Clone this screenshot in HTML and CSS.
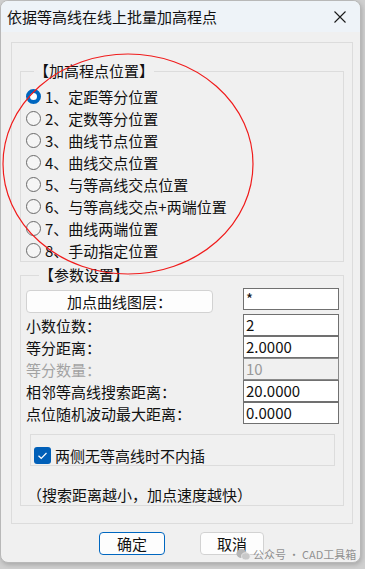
FILE: index.html
```html
<!DOCTYPE html>
<html lang="zh-CN">

<head>
    <meta charset="utf-8">
    <title>依据等高线在线上批量加高程点</title>
    <link rel="stylesheet" href="styles.css">
</head>

<body>
    <div class="window">
        <div class="titlebar">
            <span class="title">依据等高线在线上批量加高程点</span>
            <svg class="close" width="14" height="14" viewBox="0 0 14 14">
                <path d="M1.5 1.5L12.5 12.5M12.5 1.5L1.5 12.5" stroke="#1a1a1a" stroke-width="1.1" fill="none" />
            </svg>
        </div>

        <div class="client">
            <div class="frame">
                <fieldset class="group pos">
                    <legend>【加高程点位置】</legend>
                    <div class="opt"><span class="radio on"></span>1、定距等分位置</div>
                    <div class="opt"><span class="radio"></span>2、定数等分位置</div>
                    <div class="opt"><span class="radio"></span>3、曲线节点位置</div>
                    <div class="opt"><span class="radio"></span>4、曲线交点位置</div>
                    <div class="opt"><span class="radio"></span>5、与等高线交点位置</div>
                    <div class="opt"><span class="radio"></span>6、与等高线交点+两端位置</div>
                    <div class="opt"><span class="radio"></span>7、曲线两端位置</div>
                    <div class="opt"><span class="radio"></span>8、手动指定位置</div>
                </fieldset>

                <fieldset class="group params">
                    <legend>【参数设置】</legend>
                    <div class="row first">
                        <span class="btn layer">加点曲线图层：</span>
                        <span class="field">*</span>
                    </div>
                    <div class="row"><span class="lbl">小数位数：</span><span class="field">2</span></div>
                    <div class="row"><span class="lbl">等分距离：</span><span class="field">2.0000</span></div>
                    <div class="row off"><span class="lbl">等分数量：</span><span class="field">10</span></div>
                    <div class="row"><span class="lbl">相邻等高线搜索距离：</span><span class="field">20.0000</span></div>
                    <div class="row"><span class="lbl">点位随机波动最大距离：</span><span class="field">0.0000</span></div>

                    <div class="checkbox-box">
                        <span class="check">
                            <svg width="17" height="17" viewBox="0 0 17 17">
                                <path d="M4.5 8.8L7.2 11.3L12.5 6" stroke="#fff" stroke-width="1.2" fill="none" />
                            </svg>
                        </span>
                        两侧无等高线时不内插
                    </div>

                    <p class="hint">（搜索距离越小，加点速度越快）</p>
                </fieldset>
            </div>

            <div class="footer">
                <span class="btn ok">确定</span>
                <span class="btn cancel">取消</span>
            </div>
        </div>

        <!-- red annotation drawn over the dialog -->
        <svg class="mark" width="361" height="563" viewBox="0 0 361 563">
            <ellipse cx="127" cy="163" rx="125" ry="110" fill="none" stroke="#f01c1c" stroke-width="1.2" />
        </svg>

        <div class="watermark">
            <svg width="15" height="13" viewBox="0 0 16 14">
                <ellipse cx="6" cy="6" rx="5.6" ry="4.8" fill="#b5b5b5" />
                <ellipse cx="10.5" cy="9" rx="4.6" ry="3.9" fill="#c9c9c9" stroke="#f0f0f0" stroke-width="0.8" />
            </svg>
            <span>公众号 · CAD工具箱</span>
        </div>
    </div>
</body>

</html>
```

FILE: styles.css
```css
* {
    box-sizing: border-box;
}

html,
body {
    margin: 0;
    height: 100%;
}

body {
    background: #cfcfcf;
    font-family: "Noto Sans CJK SC", "Noto Sans", sans-serif;
    font-size: 15px;
    color: #111;
}

.window {
    position: relative;
    width: 361px;
    height: 563px;
    background: #f0f0f0;
    border: 1px solid #b8b8b8;
    border-radius: 8px;
    overflow: hidden;
    box-shadow: 1px 2px 4px rgba(0, 0, 0, .18);
}

.titlebar {
    height: 31px;
    background: #eef3f8;
    display: flex;
    align-items: center;
    justify-content: space-between;
    padding: 0 13px 0 6px;
}

.title {
    font-size: 15px;
    line-height: 31px;
    color: #111;
}

.client {
    padding: 10px 0 0 10px;
}

.frame {
    width: 342px;
    height: 482px;
    border: 1px solid #dcdcdc;
    padding: 18px 8px 0 8px;
}

.group {
    margin: 0;
    padding: 0;
    min-width: 0;
    border: 1px solid #dcdcdc;
}

.group legend {
    padding: 0;
    margin-left: 13px;
    line-height: 20px;
}

.pos {
    padding-top: 4px;
}

.opt {
    display: flex;
    align-items: center;
    height: 22px;
    padding-left: 5px;
}

.radio {
    width: 15px;
    height: 15px;
    border-radius: 50%;
    border: 1px solid #6a6a6a;
    background: #f5f5f5;
    margin-right: 4px;
    flex: none;
}

.radio.on {
    border: 4.5px solid #0067c0;
    background: #fff;
}

.params {
    margin-top: 3px;
    padding: 5px 4px 0 5px;
}

.row {
    display: flex;
    justify-content: space-between;
    align-items: center;
    height: 22px;
}

.row.first {
    height: 24px;
    align-items: flex-start;
}

.row.first .field {
    margin-top: -2px;
}

.field {
    width: 96px;
    height: 22px;
    border: 1px solid #707070;
    background: #fff;
    line-height: 20px;
    padding-left: 2px;
}

.row.off .lbl {
    color: #a3a3a3;
}

.row.off .field {
    background: #f0f0f0;
    color: #9a9a9a;
    border-color: #8a8a8a;
}

.btn {
    display: flex;
    align-items: center;
    justify-content: center;
    height: 23px;
    border: 1px solid #d2d2d2;
    border-radius: 4px;
    background: #fdfdfd;
}

.layer {
    width: 187px;
}

.checkbox-box {
    display: flex;
    align-items: center;
    margin: 10px 0 0 4px;
    width: 305px;
    height: 32px;
    border: 1px solid #dcdcdc;
    padding: 12px 0 1px 3px;
}

.check {
    width: 17px;
    height: 17px;
    border-radius: 3px;
    background: #005fb8;
    margin-right: 4px;
    flex: none;
}

.check svg {
    display: block;
}

.hint {
    margin: 19px 0 0;
    line-height: 20px;
    padding-left: 1px;
}

.footer {
    display: flex;
    gap: 35px;
    margin-top: 8px;
    padding-left: 88px;
}

.ok {
    width: 66px;
    border-color: #0067c0;
}

.cancel {
    width: 64px;
}

.mark {
    position: absolute;
    left: 0;
    top: 0;
    pointer-events: none;
}

.watermark {
    position: absolute;
    left: 235px;
    top: 545px;
    display: flex;
    align-items: center;
    gap: 2px;
    font-size: 11px;
    white-space: nowrap;
    color: rgba(110, 110, 110, .75);
}
```
